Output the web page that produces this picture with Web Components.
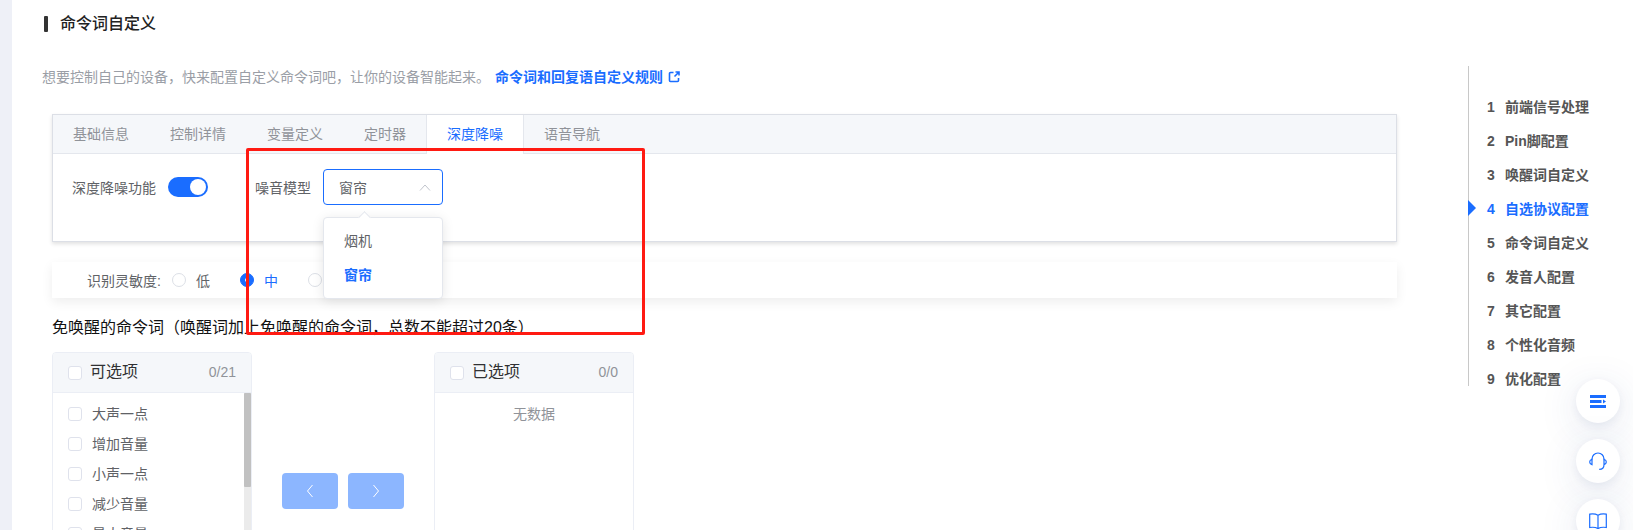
<!doctype html>
<html lang="zh">
<head>
<meta charset="utf-8">
<title>命令词自定义</title>
<style>
  html, body { margin: 0; height: 530px; overflow: hidden; background: #fff; }
  body {
    display: flex;
    font-family: "Liberation Sans", "Noto Sans CJK SC", sans-serif;
    font-size: 14px;
    color: #5f6368;
  }
  config-page { flex: 1; }
</style>
</head>
<body>
<config-page></config-page>

<script>
const BLUE = '#1a6dff';

class SectionTitle extends HTMLElement {
  constructor() {
    super();
    this.attachShadow({ mode: 'open' });
    this.shadowRoot.innerHTML = `
      <style>
        :host { display: flex; align-items: center; height: 16px; gap: 12px; margin-left: 32px; padding-top: 16px; }
        .bar { width: 4px; height: 16px; background: #333; border-radius: 1px; }
        .text { font-size: 16px; font-weight: 500; color: #222; line-height: 16px; }
      </style>
      <span class="bar"></span><span class="text"><slot></slot></span>
    `;
  }
}

class TabPanel extends HTMLElement {
  constructor() {
    super();
    this.attachShadow({ mode: 'open' });
    this.shadowRoot.innerHTML = `
      <style>
        :host { display: block; height: 128px; border: 1px solid #dcdfe6; box-shadow: 0 2px 4px rgba(0,0,0,.12); background: #fff; box-sizing: border-box; }
        .head { display: flex; height: 39px; background: #f5f7fa; border-bottom: 1px solid #e4e7ed; box-sizing: border-box; }
        .tab { padding: 0 20px; line-height: 38px; color: #909399; border-right: 1px solid transparent; }
        .tab.on { background: #fff; color: ${BLUE}; margin-left: -1px; border-left: 1px solid #e4e7ed; border-right-color: #e4e7ed; height: 39px; }
        .body { padding: 15px 19px; display: flex; align-items: center; }
      </style>
      <div class="head">
        <div class="tab">基础信息</div>
        <div class="tab">控制详情</div>
        <div class="tab">变量定义</div>
        <div class="tab">定时器</div>
        <div class="tab on">深度降噪</div>
        <div class="tab">语音导航</div>
      </div>
      <div class="body"><slot></slot></div>
    `;
  }
}

class ToggleSwitch extends HTMLElement {
  constructor() {
    super();
    this.attachShadow({ mode: 'open' });
    this.shadowRoot.innerHTML = `
      <style>
        :host { display: flex; align-items: center; }
        .track { width: 40px; height: 20px; border-radius: 10px; background: ${BLUE}; margin-left: 12px; display: flex; justify-content: flex-end; align-items: center; padding: 0 2px; box-sizing: border-box; }
        .knob { width: 16px; height: 16px; border-radius: 50%; background: #fff; }
        .label { color: #606266; }
      </style>
      <span class="label"><slot></slot></span><span class="track"><span class="knob"></span></span>
    `;
  }
}

class SelectBox extends HTMLElement {
  constructor() {
    super();
    this.attachShadow({ mode: 'open' });
    this.shadowRoot.innerHTML = `
      <style>
        :host { display: flex; align-items: center; position: relative; margin-left: 47px; }
        .label { color: #606266; width: 68px; }
        .box { width: 120px; height: 36px; border: 1px solid ${BLUE}; border-radius: 4px; box-sizing: border-box; display: flex; align-items: center; justify-content: space-between; padding: 0 11px 0 15px; color: #606266; }
        .drop { position: absolute; left: 68px; top: 48px; width: 120px; height: 82px; box-sizing: border-box; background: #fff; border: 1px solid #e4e7ed; border-radius: 4px; box-shadow: 0 2px 12px rgba(0,0,0,.1); padding: 6px 0; z-index: 5; }
        .drop::before { content: ""; position: absolute; left: 36px; top: -5px; width: 8px; height: 8px; background: #fff; border-left: 1px solid #e4e7ed; border-top: 1px solid #e4e7ed; transform: rotate(45deg); }
        .item { height: 34px; line-height: 34px; padding: 0 20px; color: #606266; }
        .item.on { color: ${BLUE}; font-weight: 700; }
      </style>
      <span class="label"><slot></slot></span>
      <div class="box">
        <span>窗帘</span>
        <svg width="12" height="7" viewBox="0 0 12 7" fill="none" stroke="#c0c4cc" stroke-width="1"><path d="M1 6.5 6 1l5 5.5"/></svg>
      </div>
      <div class="drop">
        <div class="item">烟机</div>
        <div class="item on">窗帘</div>
      </div>
    `;
  }
}

class SensitivityRow extends HTMLElement {
  constructor() {
    super();
    this.attachShadow({ mode: 'open' });
    this.shadowRoot.innerHTML = `
      <style>
        :host { display: flex; align-items: center; height: 36px; margin-top: 20px; box-shadow: 0 4px 12px rgba(0,0,0,.07); background: #fff; padding-left: 35px; }
        .label { width: 85px; color: #606266; }
        .radio { display: flex; align-items: center; width: 68px; color: #606266; gap: 10px; }
        .dot { width: 14px; height: 14px; border: 1px solid #dcdfe6; border-radius: 50%; box-sizing: border-box; background: #fff; }
        .on { color: ${BLUE}; }
        .on .dot { background: ${BLUE}; border-color: ${BLUE}; display: flex; align-items: center; justify-content: center; }
        .on .dot::after { content: ""; width: 4px; height: 4px; border-radius: 50%; background: #fff; }
      </style>
      <span class="label">识别灵敏度:</span>
      <span class="radio"><span class="dot"></span>低</span>
      <span class="radio on"><span class="dot"></span>中</span>
      <span class="radio"><span class="dot"></span></span>
    `;
  }
}

class CheckMark extends HTMLElement {
  constructor() {
    super();
    this.attachShadow({ mode: 'open' });
    this.shadowRoot.innerHTML = `
      <style>
        :host { display: block; width: 14px; height: 14px; box-sizing: border-box; border: 1px solid #dfe2ec; border-radius: 3px; background: #fff; flex: none; }
      </style>
    `;
  }
}

class TransferPanel extends HTMLElement {
  constructor() {
    super();
    this.attachShadow({ mode: 'open' });
    this.shadowRoot.innerHTML = `
      <style>
        :host { display: block; width: 200px; height: 300px; box-sizing: border-box; border: 1px solid #ebeef5; border-radius: 4px; background: #fff; flex: none; position: relative; overflow: hidden; }
        .head { height: 40px; box-sizing: border-box; background: #f5f7fa; border-bottom: 1px solid #ebeef5; display: flex; align-items: center; padding: 0 15px; }
        .title { font-size: 16px; line-height: 16px; padding-bottom: 2px; color: #303133; margin-left: 8px; flex: 1; }
        .count { color: #909399; line-height: 14px; padding-bottom: 2px; }
        .list { position: relative; padding-top: 6px; height: 258px; box-sizing: border-box; }
        ::slotted(*) { display: block; }
        .track { display: none; position: absolute; right: 0; top: 0; bottom: 0; width: 7px; background: #ebebeb; }
        .thumb { height: 94px; background: #c1c1c1; border-radius: 1px; }
        :host([scroll]) .track { display: block; }
      </style>
      <div class="head"><check-mark></check-mark><span class="title"></span><span class="count"></span></div>
      <div class="list"><slot></slot><div class="track"><div class="thumb"></div></div></div>
    `;
  }
  connectedCallback() {
    this.shadowRoot.querySelector('.title').textContent = this.getAttribute('label');
    this.shadowRoot.querySelector('.count').textContent = this.getAttribute('count');
  }
}

class TransferItem extends HTMLElement {
  constructor() {
    super();
    this.attachShadow({ mode: 'open' });
    this.shadowRoot.innerHTML = `
      <style>
        :host { display: flex !important; align-items: center; gap: 10px; height: 30px; padding-left: 15px; color: #606266; }
        .t { padding-bottom: 2px; }
      </style>
      <check-mark></check-mark><span class="t"><slot></slot></span>
    `;
  }
}

class ArrowButton extends HTMLElement {
  constructor() {
    super();
    this.attachShadow({ mode: 'open' });
    const d = this.getAttribute('dir') === 'left' ? 'M6.5 1 1.5 7l5 6' : 'M1.5 1l5 6-5 6';
    this.shadowRoot.innerHTML = `
      <style>
        :host { display: flex; align-items: center; justify-content: center; width: 56px; height: 36px; background: #8cb6ff; border-radius: 4px; }
      </style>
      <svg width="8" height="14" viewBox="0 0 8 14" fill="none" stroke="#fff" stroke-width="1"><path d="${d}"/></svg>
    `;
  }
}

class TocNav extends HTMLElement {
  constructor() {
    super();
    this.attachShadow({ mode: 'open' });
    const rows = ['前端信号处理', 'Pin脚配置', '唤醒词自定义', '自选协议配置', '命令词自定义', '发音人配置', '其它配置', '个性化音频', '优化配置'];
    this.shadowRoot.innerHTML = `
      <style>
        :host { display: block; width: 165px; height: 320px; margin-top: 66px; background: linear-gradient(#c8c8c8, #c8c8c8) 0 0 / 1px 100% no-repeat; box-sizing: border-box; overflow: hidden; position: relative; padding-top: 24px; }
        .row { display: flex; height: 34px; line-height: 34px; padding-left: 19px; font-weight: 700; color: #555; position: relative; }
        .n { width: 18px; }
        .row.on { color: ${BLUE}; }
        .row.on::before { content: ""; position: absolute; left: 0; top: 8px; border-left: 8px solid ${BLUE}; border-top: 8px solid transparent; border-bottom: 8px solid transparent; }
      </style>
      ${rows.map((t, i) => `<div class="row${i === 3 ? ' on' : ''}"><span class="n">${i + 1}</span><span>${t}</span></div>`).join('')}
    `;
  }
}

class FloatButton extends HTMLElement {
  constructor() {
    super();
    this.attachShadow({ mode: 'open' });
    this.shadowRoot.innerHTML = `
      <style>
        :host { display: flex; align-items: center; justify-content: center; position: absolute; left: 1576px; width: 44px; height: 44px; border-radius: 50%; background: #fff; box-shadow: 0 3px 8px rgba(40,60,120,.07), 0 8px 40px rgba(40,70,140,.13); }
      </style>
      <slot></slot>
    `;
  }
}

class ConfigPage extends HTMLElement {
  constructor() {
    super();
    this.attachShadow({ mode: 'open' });
    this.shadowRoot.innerHTML = `
      <style>
        :host { display: flex; height: 530px; overflow: hidden; position: relative; }
        .strip { width: 12px; background: #eef0f7; flex: none; }
        .main { width: 1456px; flex: none; }
        .desc { margin: 35px 0 0 30px; height: 20px; line-height: 20px; color: #9a9ea6; display: flex; align-items: center; white-space: nowrap; }
        .link { color: ${BLUE}; font-weight: 700; margin-left: 5px; }
        .link-icon { margin-left: 5px; }
        .content { margin: 27px 0 0 40px; width: 1345px; }
        .note { margin-top: 18px; height: 24px; line-height: 24px; font-size: 16px; color: #111; white-space: nowrap; }
        .transfer { display: flex; margin-top: 12px; }
        .buttons { display: flex; gap: 10px; margin: 121px 30px 0 30px; }
        .empty { text-align: center; line-height: 30px; color: #909399; }
        .mark { position: absolute; left: 246px; top: 148px; width: 399px; height: 187px; box-sizing: border-box; border: 3px solid #ff1a12; border-radius: 2px; z-index: 9; }
      </style>
      <div class="strip"></div>
      <div class="main">
        <section-title>命令词自定义</section-title>
        <div class="desc">想要控制自己的设备，快来配置自定义命令词吧，让你的设备智能起来。<span class="link">命令词和回复语自定义规则</span>
          <svg class="link-icon" width="12" height="12" viewBox="0 0 12 12" fill="none" stroke="${BLUE}" stroke-width="1.600"><path d="M5.500 1.500H2.500a1 1 0 0 0-1 1v7a1 1 0 0 0 1 1h7a1 1 0 0 0 1-1V7"/><path d="M7.500 1h3.500v3.500M10.500 1.500 6.500 5.500"/></svg>
        </div>
        <div class="content">
          <tab-panel>
            <toggle-switch>深度降噪功能</toggle-switch>
            <select-box>噪音模型</select-box>
          </tab-panel>
          <sensitivity-row></sensitivity-row>
          <div class="note">免唤醒的命令词（唤醒词加上免唤醒的命令词，总数不能超过20条）</div>
          <div class="transfer">
            <transfer-panel label="可选项" count="0/21" scroll>
              <transfer-item>大声一点</transfer-item>
              <transfer-item>增加音量</transfer-item>
              <transfer-item>小声一点</transfer-item>
              <transfer-item>减少音量</transfer-item>
              <transfer-item>最大音量</transfer-item>
            </transfer-panel>
            <div class="buttons">
              <arrow-button dir="left"></arrow-button>
              <arrow-button dir="right"></arrow-button>
            </div>
            <transfer-panel label="已选项" count="0/0">
              <div class="empty">无数据</div>
            </transfer-panel>
          </div>
        </div>
      </div>
      <toc-nav></toc-nav>
      <float-button style="top:379px">
        <svg width="16" height="13" viewBox="0 0 16 13" fill="${BLUE}"><path d="M0 0h16v3H0zM0 5h11.500v3H0zM0 10h16v3H0zM13 4.500l3 2-3 2z"/></svg>
      </float-button>
      <float-button style="top:439px">
        <svg width="18" height="18" viewBox="0 0 18 18" fill="none" stroke="${BLUE}" stroke-width="1.200"><path d="M3 7.500V7a6 6 0 0 1 12 0v.500"/><path d="M3 7.300C1.500 7.800.700 8.800.700 10s.8 2.200 2.300 2.700zM15 7.300c1.500.5 2.300 1.500 2.300 2.700s-.8 2.200-2.300 2.700zM15 12.700c0 2.800-1.800 4.600-4.800 4.700"/></svg>
      </float-button>
      <float-button style="top:499px">
        <svg width="18" height="16" viewBox="0 0 18 16" fill="none" stroke="${BLUE}" stroke-width="1.200"><path d="M.700 1.200C3.800.700 6.800 1 9 2.300c2.200-1.300 5.200-1.600 8.300-1.100v13.300c-3.100-.5-6.100-.2-8.300 1.100-2.200-1.300-5.200-1.600-8.300-1.100zM9 2.300v13.300"/></svg>
      </float-button>
      <div class="mark"></div>
    `;
  }
}

customElements.define('section-title', SectionTitle);
customElements.define('tab-panel', TabPanel);
customElements.define('toggle-switch', ToggleSwitch);
customElements.define('select-box', SelectBox);
customElements.define('sensitivity-row', SensitivityRow);
customElements.define('check-mark', CheckMark);
customElements.define('transfer-panel', TransferPanel);
customElements.define('transfer-item', TransferItem);
customElements.define('arrow-button', ArrowButton);
customElements.define('toc-nav', TocNav);
customElements.define('float-button', FloatButton);
customElements.define('config-page', ConfigPage);
</script>
</body>
</html>
